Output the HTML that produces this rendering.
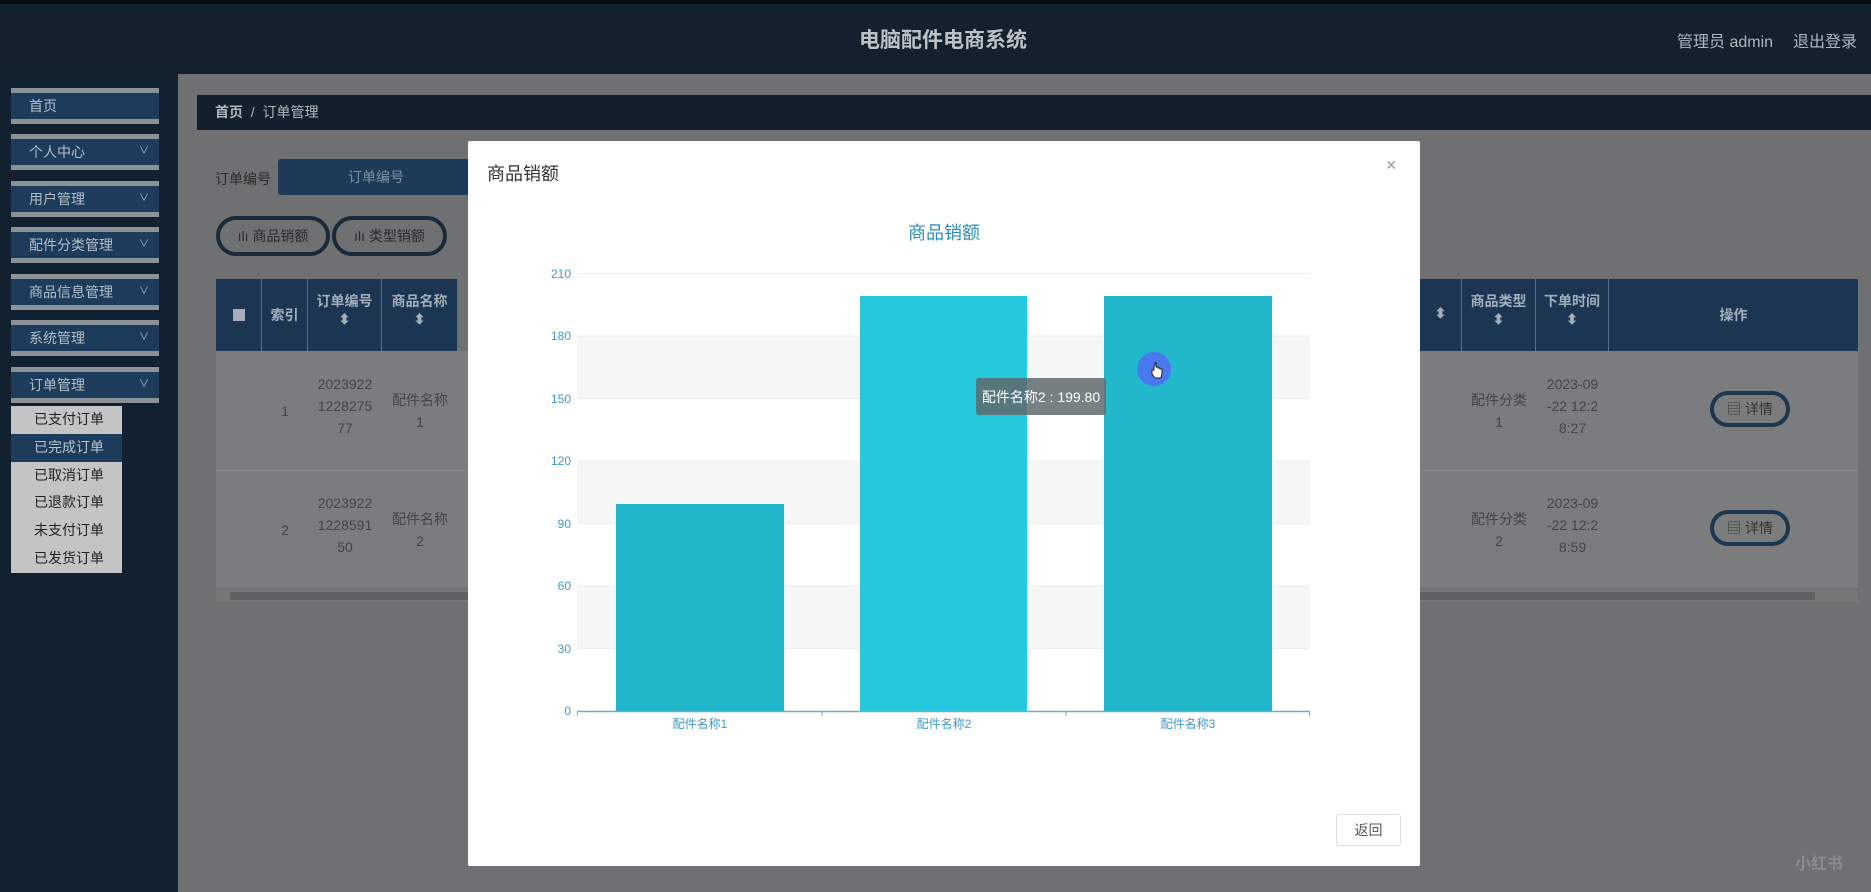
<!DOCTYPE html>
<html><head><meta charset="utf-8"><style>
*{margin:0;padding:0;box-sizing:border-box}
body{width:1871px;height:892px;overflow:hidden;background:#122130;font-family:"Liberation Sans","Noto Sans CJK SC",sans-serif;position:relative}
.a{position:absolute}
.top{left:0;top:0;width:1871px;height:74px;background:#13212e;border-top:4px solid #050a0f}
.side{left:0;top:74px;width:178px;height:818px;background:#122130}
.mi{position:absolute;left:11px;width:148px;height:36px;background:#1d3c5c;border-top:5px solid #8a9298;border-bottom:5px solid #8a9298;color:#b4bec8;font-size:14px;line-height:26px;padding-left:18px}
.mi i{position:absolute;right:10px;top:4px;font-style:normal;font-size:10px;line-height:18px}
.sub{left:11px;top:406px;width:111px;height:167px;background:#c4c4c4}
.sub div{height:27.8px;line-height:27.8px;padding-left:23px;font-size:14px;color:#222}
.main{left:178px;top:74px;width:1693px;height:818px;background:#6e7072}
.th{position:absolute;top:279px;height:72px;background:#1b3553;color:#a4aebb;font-size:14px;font-weight:bold;text-align:center;border-right:1px solid #5a7088;padding-top:12px}
.td{position:absolute;color:#444;font-size:14px;text-align:center;line-height:22px}
</style></head><body>
<div class="a top"></div>
<div class="a" style="left:0;top:24px;width:1886px;text-align:center;color:#bcc1c6;font-size:21px;font-weight:bold">电脑配件电商系统</div>
<div class="a" style="left:1677px;top:28px;color:#b0b6bc;font-size:16px">管理员 admin</div>
<div class="a" style="left:1793px;top:28px;color:#b0b6bc;font-size:16px">退出登录</div>
<div class="a side"></div>
<div class="mi" style="top:88px">首页</div>
<div class="mi" style="top:134px">个人中心<i>∨</i></div>
<div class="mi" style="top:181px">用户管理<i>∨</i></div>
<div class="mi" style="top:227px">配件分类管理<i>∨</i></div>
<div class="mi" style="top:274px">商品信息管理<i>∨</i></div>
<div class="mi" style="top:320px">系统管理<i>∨</i></div>
<div class="mi" style="top:367px">订单管理<i>∨</i></div>
<div class="a sub"><div>已支付订单</div><div style="background:#1d3c5c;color:#b8c4d0">已完成订单</div><div>已取消订单</div><div>已退款订单</div><div>未支付订单</div><div>已发货订单</div></div>
<div class="a main"></div>
<div class="a" style="left:197px;top:95px;width:1674px;height:35px;background:#12202d;color:#b0b6bc;font-size:14px;line-height:35px;padding-left:18px"><b>首页</b> &nbsp;/ &nbsp;订单管理</div>
<div class="a" style="left:215px;top:169px;color:#2a2a2a;font-size:14px">订单编号</div>
<div class="a" style="left:278px;top:159px;width:200px;height:36px;background:#1d3a58;color:#7f90a0;font-size:14px;line-height:36px;padding-left:70px;border-radius:3px">订单编号</div>
<div class="a" style="left:216px;top:216px;width:114px;height:40px;border:4px solid #1a2a38;border-radius:20px;color:#2a2a2a;font-size:14px;line-height:32px;text-align:center">ılı 商品销额</div>
<div class="a" style="left:332px;top:216px;width:115px;height:40px;border:4px solid #1a2a38;border-radius:20px;color:#2a2a2a;font-size:14px;line-height:32px;text-align:center">ılı 类型销额</div>
<div class="th" style="left:216px;width:46px"><div style="width:12px;height:12px;background:#aab;margin:18px auto"></div></div>
<div class="th" style="left:262px;width:46px;padding-top:26px">索引</div>
<div class="th" style="left:308px;width:74px">订单编号<br>⬍</div>
<div class="th" style="left:382px;width:76px">商品名称<br>⬍</div>
<div class="th" style="left:1420px;width:42px;padding-top:26px">⬍</div>
<div class="th" style="left:1462px;width:74px">商品类型<br>⬍</div>
<div class="th" style="left:1536px;width:73px">下单时间<br>⬍</div>
<div class="th" style="left:1609px;width:249px;padding-top:26px;border:none">操作</div>
<div class="a" style="left:216px;top:351px;width:1642px;height:237px;background:#7a7c7e"></div>
<div class="a" style="left:216px;top:470px;width:1642px;height:1px;background:#868888"></div>
<div class="td" style="left:262px;top:400px;width:46px">1</div>
<div class="td" style="left:308px;top:373px;width:74px">2023922<br>1228275<br>77</div>
<div class="td" style="left:382px;top:389px;width:76px">配件名称<br>1</div>
<div class="td" style="left:262px;top:519px;width:46px">2</div>
<div class="td" style="left:308px;top:492px;width:74px">2023922<br>1228591<br>50</div>
<div class="td" style="left:382px;top:508px;width:76px">配件名称<br>2</div>
<div class="td" style="left:1462px;top:389px;width:74px">配件分类<br>1</div>
<div class="td" style="left:1536px;top:373px;width:73px">2023-09<br>-22 12:2<br>8:27</div>
<div class="td" style="left:1462px;top:508px;width:74px">配件分类<br>2</div>
<div class="td" style="left:1536px;top:492px;width:73px">2023-09<br>-22 12:2<br>8:59</div>
<div class="a" style="left:1710px;top:391px;width:80px;height:36px;border:4px solid #1c3650;border-radius:18px;font-size:14px;line-height:28px;text-align:center;color:#333">▤ 详情</div>
<div class="a" style="left:1710px;top:510px;width:80px;height:36px;border:4px solid #1c3650;border-radius:18px;font-size:14px;line-height:28px;text-align:center;color:#333">▤ 详情</div>
<div class="a" style="left:216px;top:590px;width:1642px;height:12px;background:#777"></div>
<div class="a" style="left:230px;top:592px;width:1585px;height:8px;background:#5e6062"></div>
<!-- modal -->
<div class="a" style="left:468px;top:141px;width:952px;height:725px;background:#fff;border-radius:2px"></div>
<div class="a" style="left:487px;top:160px;font-size:18px;color:#333">商品销额</div>
<div class="a" style="left:1386px;top:155px;font-size:18px;color:#999">×</div>
<div class="a" style="left:468px;top:219px;width:952px;text-align:center;font-size:18px;color:#2a8fbf">商品销额</div>
<svg class="a" style="left:468px;top:141px" width="952" height="725">
<g transform="translate(-468,-141)">
<rect x="577" y="336" width="733" height="62.6" fill="#f6f6f6"/>
<rect x="577" y="461" width="733" height="62.6" fill="#f6f6f6"/>
<rect x="577" y="586" width="733" height="62.6" fill="#f6f6f6"/>
<g stroke="#ececec" stroke-width="1"><line x1="577" x2="1310" y1="273.5" y2="273.5"/><line x1="577" x2="1310" y1="336" y2="336"/><line x1="577" x2="1310" y1="398.6" y2="398.6"/><line x1="577" x2="1310" y1="461" y2="461"/><line x1="577" x2="1310" y1="523.6" y2="523.6"/><line x1="577" x2="1310" y1="586" y2="586"/><line x1="577" x2="1310" y1="648.6" y2="648.6"/></g>
<rect x="616" y="504" width="168" height="207" fill="#22b8cc"/>
<rect x="860" y="296" width="167" height="415" fill="#25c8dd"/>
<rect x="1104" y="296" width="168" height="415" fill="#22b8cc"/>
<line x1="577" x2="1310" y1="711.5" y2="711.5" stroke="#6aaed0" stroke-width="1.5"/>
<g stroke="#6aaed0"><line x1="577.5" x2="577.5" y1="711" y2="716"/><line x1="822" x2="822" y1="711" y2="716"/><line x1="1066" x2="1066" y1="711" y2="716"/><line x1="1309.5" x2="1309.5" y1="711" y2="716"/></g>
<g fill="#3b9bc8" font-size="12" text-anchor="end" font-family="Liberation Sans,sans-serif"><text x="571" y="278">210</text><text x="571" y="340">180</text><text x="571" y="403">150</text><text x="571" y="465">120</text><text x="571" y="528">90</text><text x="571" y="590">60</text><text x="571" y="653">30</text><text x="571" y="715">0</text></g>
<g fill="#3b9bc8" font-size="12" text-anchor="middle" font-family="Liberation Sans,Noto Sans CJK SC,sans-serif"><text x="700" y="728">配件名称1</text><text x="944" y="728">配件名称2</text><text x="1188" y="728">配件名称3</text></g>
<rect x="976" y="378" width="130" height="37" rx="3" fill="#5f6a6c" fill-opacity="0.85"/>
<text x="1041" y="402" fill="#fff" font-size="14" text-anchor="middle" font-family="Liberation Sans,Noto Sans CJK SC,sans-serif">配件名称2 : 199.80</text>
<circle cx="1154" cy="369" r="17" fill="#4a78ee"/>
<path d="M1154 366 v4 h-2 v4 l3 4 h6 l1-5 v-4 h-2 v-1 h-2 v-1 h-2 v-5 z" fill="#fff" stroke="#222" stroke-width="1"/>
</g></svg>
<div class="a" style="left:1336px;top:814px;width:65px;height:32px;border:1px solid #ddd;border-radius:3px;font-size:14px;color:#555;text-align:center;line-height:30px">返回</div>
<div class="a" style="left:1795px;top:850px;font-size:16px;color:#8a8c8e;font-weight:bold">小红书</div>
</body></html>
